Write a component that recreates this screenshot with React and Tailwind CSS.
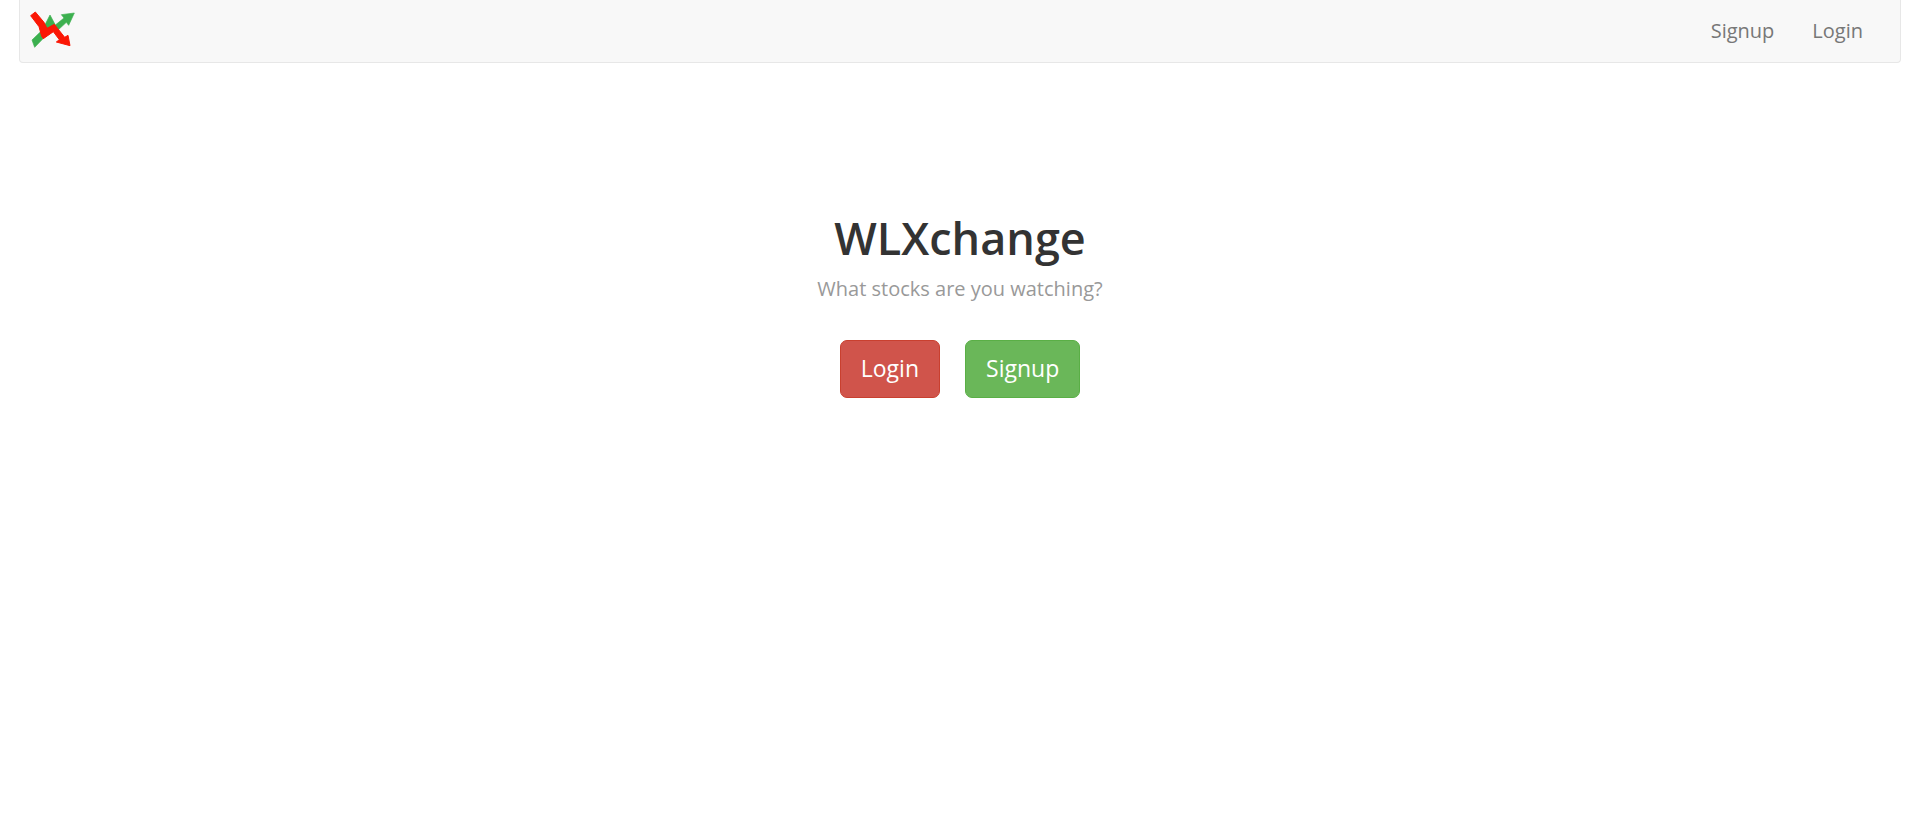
function Logo() {
  return (
    <svg viewBox="0 0 132 111" className="h-[37px] w-11 overflow-visible" role="img" aria-label="WLXchange">
      <path
        fill="#3cb04f"
        stroke="#3cb04f"
        strokeWidth="2"
        d="M6 84 L37 54 L60 9 L76 39 L102 18 L94 8 L133 3 L116 40 L109 31 L80 58 L60 48 L43 76 L14 106 Z"
      />
      <path
        fill="#fb1705"
        stroke="#fb1705"
        strokeWidth="3"
        d="M2 11 L16 0 L42 31 L51 49 L73 37 L104 76 L114 70 L120 101 L79 90 L88 83 L70 59 L40 80 L35 73 L27 44 Z"
      />
    </svg>
  );
}

export default function App() {
  return (
    <div className="min-h-screen bg-white pl-[19px] pr-[11px] font-['Open_Sans',sans-serif] text-[#333333]">
      <nav className="flex h-[63px] items-center justify-between rounded-b border border-t-0 border-[#e7e7e7] bg-[#f8f8f8] pl-[10px] pr-[18px]">
        <a href="#home" className="pb-0.5">
          <Logo />
        </a>
        <ul className="flex text-xl leading-7 text-[#777777]">
          <li>
            <a href="#signup" className="block px-[19px] py-4">Signup</a>
          </li>
          <li>
            <a href="#login" className="block px-[19px] py-4">Login</a>
          </li>
        </ul>
      </nav>
      <main className="flex flex-col items-center pt-[150px]">
        <h1 className="text-[45px] font-semibold leading-[50px]">WLXchange</h1>
        <p className="mt-3 text-xl leading-7 text-[#999999]">What stocks are you watching?</p>
        <div className="mt-[37px] flex gap-[25px] text-[23px] leading-8 text-white">
          <button type="button" className="h-[58px] rounded-[7px] border border-[#c9402f] bg-[#d0544b] px-5 pb-0.5">
            Login
          </button>
          <button type="button" className="h-[58px] rounded-[7px] border border-[#5aaf46] bg-[#6ab759] px-5 pb-0.5">
            Signup
          </button>
        </div>
      </main>
    </div>
  );
}
